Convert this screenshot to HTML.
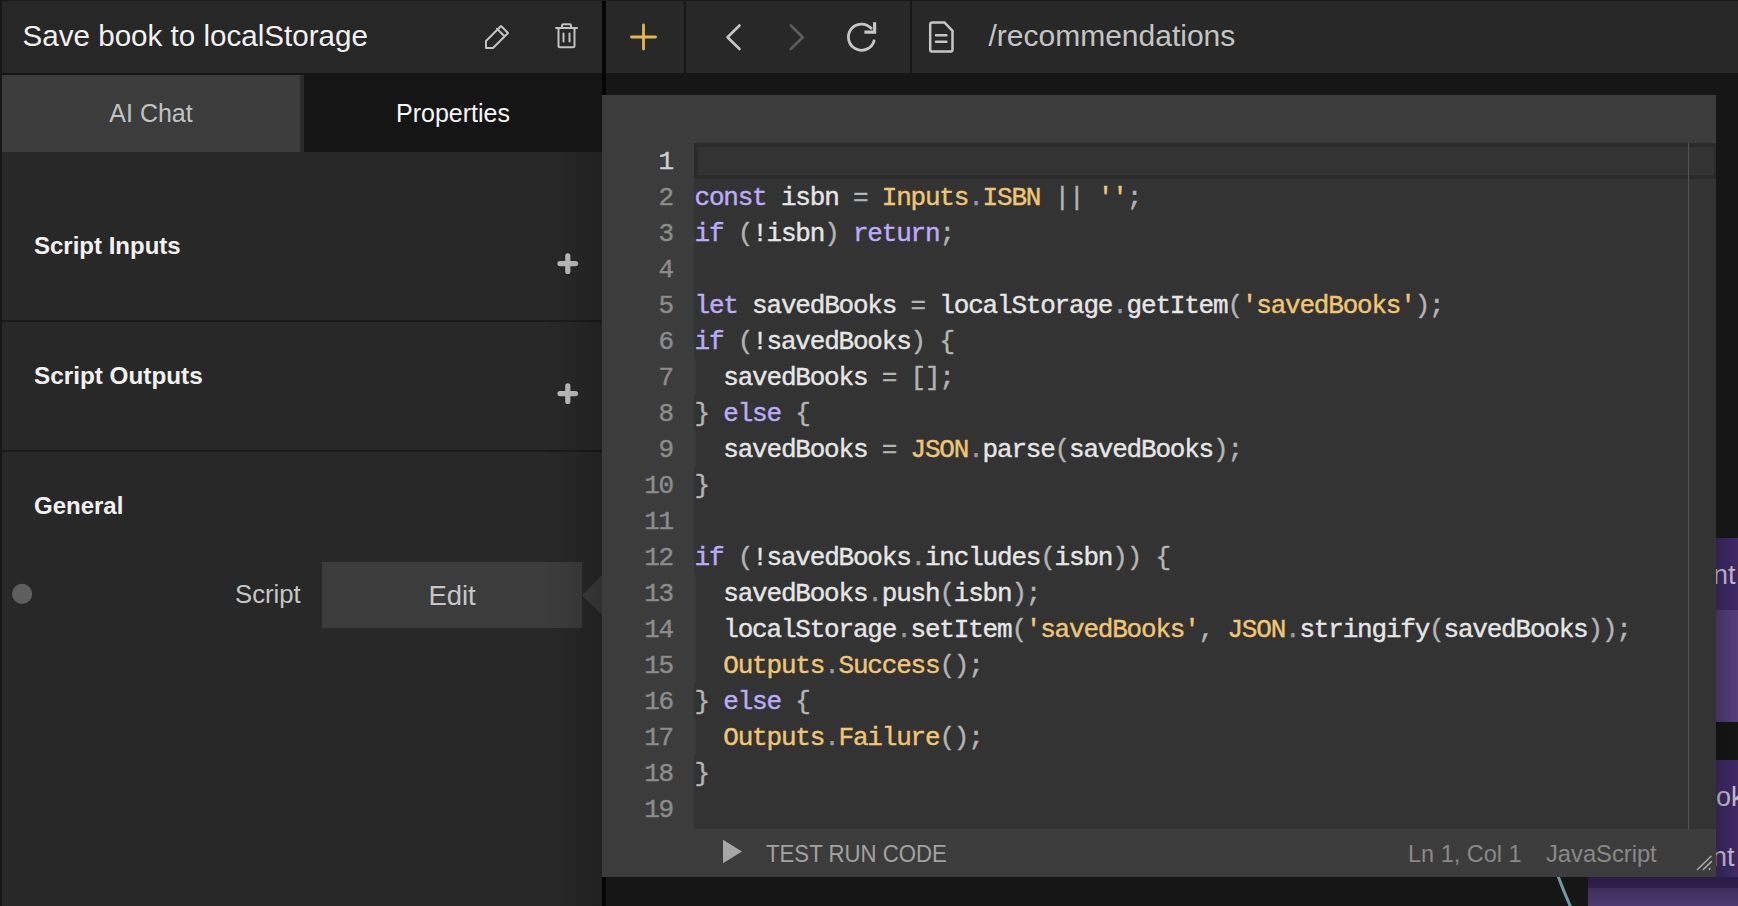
<!DOCTYPE html>
<html><head><meta charset="utf-8">
<style>
*{margin:0;padding:0;box-sizing:border-box}
html,body{width:1738px;height:906px;overflow:hidden;background:#161616;font-family:"Liberation Sans",sans-serif}
.abs{position:absolute}
#lp{position:absolute;left:0;top:0;width:602px;height:906px;z-index:5;background:#282828;overflow:hidden}
#lborder{left:0;top:0;width:2px;height:906px;background:#171717}
#hdr{left:2px;top:1px;width:600px;height:72px;background:#272727}
#hdrline{left:0;top:0;width:602px;height:1px;background:#1a1a1a}
#hdrb{left:2px;top:73px;width:600px;height:2px;background:#151515}
#title{left:22.5px;top:18.5px;font-size:29.6px;color:#f2f2f2;white-space:nowrap;line-height:34px}
#tab1{left:2px;top:75px;width:298px;height:77px;background:#3c3c3c;color:#c2c2c2;font-size:25px;text-align:center;line-height:77px}
#tabgap{left:300px;top:75px;width:4px;height:77px;background:#2b2b2b}
#tab2{left:304px;top:73px;width:298px;height:79px;background:#151515;color:#f7f7f7;font-size:25px;text-align:center;line-height:81px}
.sep{left:2px;width:600px;height:2px;background:#1b1b1b}
.sh{left:34px;font-size:24px;font-weight:bold;color:#f2f2f2;white-space:nowrap;line-height:28px}
#shadow{left:540px;top:152px;width:62px;height:754px;background:linear-gradient(to right,rgba(0,0,0,0),rgba(0,0,0,0.05) 45%,rgba(0,0,0,0.2))}
#blackbar{left:602px;top:0;width:4px;height:95px;background:#050505;z-index:2}
#topbar{left:606px;top:1px;width:1132px;height:72px;background:#282828;z-index:2}
#topline{left:602px;top:0;width:1136px;height:1px;background:#1a1a1a;z-index:2}
.vdiv{top:1px;width:2px;height:72px;background:#171717;z-index:3}
#url{left:988.5px;top:19px;font-size:30px;color:#c4c4c4;white-space:nowrap;line-height:34px;z-index:3}
#ticons{z-index:3}
#frame{left:602px;top:95px;width:1114px;height:782px;background:#3c3c3c;z-index:1}
#fc{position:absolute;left:0;top:0;width:1738px;height:906px;z-index:4}
#code{left:694px;top:143px;width:1022px;height:686px;background:#333333}
#active{left:694px;top:143px;width:1022px;height:36px;border:4px solid #2b2b2b;border-right-width:2px;background:#333}
#ruler{left:1688px;top:143px;width:1px;height:686px;background:#545454}
#status{left:602px;top:829px;width:1114px;height:48px;background:#3c3c3c}
.ln{position:absolute;left:602px;width:71px;margin-top:0.5px;text-align:right;font-family:"Liberation Mono",monospace;font-size:26px;letter-spacing:-1.2px;color:#8c8c8c;line-height:36px;height:36px;-webkit-text-stroke:0.4px currentColor}
.cl{position:absolute;left:694.5px;margin-top:1px;font-family:"Liberation Mono",monospace;font-size:26px;letter-spacing:-1.2px;color:#e6e6e6;line-height:36px;height:36px;white-space:pre;-webkit-text-stroke:0.4px currentColor}
.ig{left:694px;width:2px;height:36px;background:#3a3a3a}
.k{color:#bcacf8}.y{color:#f0c674}.p{color:#b4b4b4}.d{color:#9a9a9a}.act{color:#d0d0d0}
.nt{position:absolute;font-size:27px;color:#cbc3d6;white-space:nowrap;line-height:34px}
.sb{position:absolute;top:839px;font-size:24.1px;white-space:nowrap;line-height:30px;transform-origin:0 0}
</style></head><body>
<div id="lp">
<div id="hdr" class="abs"></div>
<div id="hdrline" class="abs"></div>
<div id="lborder" class="abs"></div>
<div id="hdrb" class="abs"></div>
<div id="title" class="abs">Save book to localStorage</div>
<div id="tab1" class="abs">AI Chat</div>
<div id="tabgap" class="abs"></div>
<div id="tab2" class="abs">Properties</div>
<div class="abs sh" id="sh1" style="top:232px">Script Inputs</div>
<div class="abs sep" style="top:320px"></div>
<div class="abs sh" id="sh2" style="top:362px;font-size:24.3px">Script Outputs</div>
<div class="abs sep" style="top:450px"></div>
<div class="abs sh" id="sh3" style="top:492px">General</div>
<div class="abs" id="scriptlbl" style="left:235px;top:579px;font-size:25.7px;color:#c6c6c6;line-height:30px">Script</div>
<div class="abs" id="editbtn" style="left:322px;top:562px;width:260px;height:66px;background:#3c3c3c;color:#c6c6c6;font-size:27.4px;text-align:center;line-height:68px">Edit</div>
<svg class="abs" style="left:0;top:0" width="602" height="906" viewBox="0 0 602 906" fill="none">
 <g stroke="#c2c2c2" stroke-width="2" stroke-linejoin="round" stroke-linecap="round">
  <path d="M486 41 L501 26 L508 33 L493 48 L486 48 Z"/>
  <path d="M497 28.8 L504 35.8"/>
 </g>
 <g stroke="#c2c2c2" stroke-width="2" stroke-linejoin="round" stroke-linecap="round">
  <path d="M556 28 L577 28"/>
  <path d="M562 27.5 L562 25.5 Q562 24.3 563.2 24.3 L569.8 24.3 Q571 24.3 571 25.5 L571 27.5"/>
  <path d="M558.5 28.5 L558.5 45.8 Q558.5 47.3 560 47.3 L573 47.3 Q574.5 47.3 574.5 45.8 L574.5 28.5"/>
  <path d="M563.5 33.5 L563.5 41.5 M569.5 33.5 L569.5 41.5"/>
 </g>
 <g stroke="#bdbdbd" stroke-width="5.2" stroke-linecap="round">
  <path d="M567.8 255.8 L567.8 271.4 M560 263.6 L575.6 263.6"/>
  <path d="M567.8 385.8 L567.8 401.4 M560 393.6 L575.6 393.6"/>
 </g>
 <circle cx="22.1" cy="593.9" r="10.1" fill="#5e5e5e"/>
 <path d="M582 595.5 L602 575 L602 615 Z" fill="#3c3c3c"/>
</svg>
<div id="shadow" class="abs"></div>
</div>

<div id="blackbar" class="abs"></div><div class="abs" style="left:602px;top:877px;width:4px;height:29px;background:#050505"></div>
<div id="topline" class="abs"></div>
<div id="topbar" class="abs"></div>
<div class="abs vdiv" style="left:684px"></div>
<div class="abs vdiv" style="left:910px"></div>
<div id="url" class="abs">/recommendations</div>
<svg id="ticons" class="abs" style="left:606px;top:0" width="360" height="73" viewBox="606 0 360 73" fill="none">
 <g stroke="#e4b64e" stroke-width="2.8" stroke-linecap="round">
  <path d="M643.5 25 L643.5 49 M631.5 37 L655.5 37"/>
 </g>
 <path d="M739.5 25.5 L727.5 37.2 L739.5 49" stroke="#c6c6c6" stroke-width="2.6" stroke-linecap="round" stroke-linejoin="round"/>
 <path d="M790.8 25.5 L802.8 37.2 L790.8 49" stroke="#5c5c5c" stroke-width="2.6" stroke-linecap="round" stroke-linejoin="round"/>
 <g stroke="#c6c6c6" stroke-width="2.8" stroke-linecap="round" stroke-linejoin="round">
  <path d="M874.1 40.8 A13.1 13.1 0 1 1 871.2 28.3"/>
  <path d="M866 32.2 L874.6 32.2 L874.6 23.8" stroke-width="3.2" stroke-linecap="square" stroke-linejoin="miter"/>
 </g>
 <g stroke="#c6c6c6" stroke-width="2.5" stroke-linecap="round" stroke-linejoin="round">
  <path d="M932.4 22.4 L944.4 22.4 L952.5 30.8 L952.5 49.4 Q952.5 51.6 950.3 51.6 L932.4 51.6 Q930.2 51.6 930.2 49.4 L930.2 24.6 Q930.2 22.4 932.4 22.4 Z"/>
  <path d="M936 35.3 L946.4 35.3 M936 41.7 L946.4 41.7"/>
 </g>
</svg>

<div class="abs" id="node1" style="left:1600px;top:537.5px;width:200px;height:184.5px;background:#553f7e">
 <div class="abs" style="left:0;top:0;width:200px;height:72px;background:#402a69"></div>
 <div class="nt" style="left:98px;top:20px">ent</div>
</div>
<div class="abs" id="node2" style="left:1588px;top:760px;width:220px;height:160px;background:#553f7e">
 <div class="abs" style="left:0;top:0;width:220px;height:127.5px;background:#402a69"></div>
 <div class="nt" style="left:113px;top:20px">ook</div>
 <div class="nt" style="left:109px;top:80px">ent</div>
</div>
<div class="abs" style="left:1716px;top:537px;width:22px;height:340px;background:linear-gradient(to right,rgba(0,0,0,0.22),rgba(0,0,0,0.02))"></div>
<div class="abs" style="left:1588px;top:877px;width:150px;height:29px;background:linear-gradient(to bottom,rgba(0,0,0,0.34),rgba(0,0,0,0.28) 40%,rgba(0,0,0,0.08))"></div>
<svg class="abs" style="left:1540px;top:860px" width="60" height="50" viewBox="1540 860 60 50" fill="none"><path d="M1556.5 872 Q1563 890 1572 910" stroke="#6c9ba4" stroke-width="3"/></svg>

<div id="frame" class="abs"></div>
<div id="fc">
<div id="code" class="abs"></div>
<div id="active" class="abs"></div>
<div id="ruler" class="abs"></div>
<div class="abs ig" style="top:359px"></div><div class="abs ig" style="top:431px"></div><div class="abs ig" style="top:575px"></div><div class="abs ig" style="top:611px"></div><div class="abs ig" style="top:647px"></div><div class="abs ig" style="top:719px"></div>
<div id="status" class="abs"></div>
<svg class="abs" style="left:720px;top:838px" width="26" height="28" viewBox="720 838 26 28"><path d="M723 839.8 L742 851.5 L723 863.3 Z" fill="#a6a6a6"/></svg>
<div class="sb" id="testrun" style="left:765.5px;color:#a2a2a2;transform:scaleX(0.921)">TEST RUN CODE</div>
<div class="sb" id="lncol" style="left:1407.5px;color:#898989;transform:scaleX(0.975)">Ln 1, Col 1</div>
<div class="sb" id="jslbl" style="left:1545.5px;color:#898989;transform:scaleX(0.984)">JavaScript</div>
<svg class="abs" style="left:1690px;top:850px" width="26" height="26" viewBox="1690 850 26 26" fill="none" stroke="#a8a8a8" stroke-width="1.6" stroke-linecap="round">
 <path d="M1697.5 869.5 L1711 856.3 M1703.3 869.5 L1711.3 861.6 M1709.3 869.3 L1710 868.6"/>
</svg>
<div class="ln act" style="top:143px">1</div>
<div class="cl" style="top:143px"></div>
<div class="ln" style="top:179px">2</div>
<div class="cl" style="top:179px"><span class="k">const</span> isbn <span class="p">=</span> <span class="y">Inputs</span><span class="d">.</span><span class="y">ISBN</span> <span class="p">|</span><span class="p">|</span> <span class="y">&#x27;&#x27;</span><span class="p">;</span></div>
<div class="ln" style="top:215px">3</div>
<div class="cl" style="top:215px"><span class="k">if</span> <span class="p">(</span>!isbn<span class="p">)</span> <span class="k">return</span><span class="p">;</span></div>
<div class="ln" style="top:251px">4</div>
<div class="cl" style="top:251px"></div>
<div class="ln" style="top:287px">5</div>
<div class="cl" style="top:287px"><span class="k">let</span> savedBooks <span class="p">=</span> localStorage<span class="d">.</span>getItem<span class="p">(</span><span class="y">&#x27;savedBooks&#x27;</span><span class="p">)</span><span class="p">;</span></div>
<div class="ln" style="top:323px">6</div>
<div class="cl" style="top:323px"><span class="k">if</span> <span class="p">(</span>!savedBooks<span class="p">)</span> <span class="p">{</span></div>
<div class="ln" style="top:359px">7</div>
<div class="cl" style="top:359px">  savedBooks <span class="p">=</span> <span class="p">[</span><span class="p">]</span><span class="p">;</span></div>
<div class="ln" style="top:395px">8</div>
<div class="cl" style="top:395px"><span class="p">}</span> <span class="k">else</span> <span class="p">{</span></div>
<div class="ln" style="top:431px">9</div>
<div class="cl" style="top:431px">  savedBooks <span class="p">=</span> <span class="y">JSON</span><span class="d">.</span>parse<span class="p">(</span>savedBooks<span class="p">)</span><span class="p">;</span></div>
<div class="ln" style="top:467px">10</div>
<div class="cl" style="top:467px"><span class="p">}</span></div>
<div class="ln" style="top:503px">11</div>
<div class="cl" style="top:503px"></div>
<div class="ln" style="top:539px">12</div>
<div class="cl" style="top:539px"><span class="k">if</span> <span class="p">(</span>!savedBooks<span class="d">.</span>includes<span class="p">(</span>isbn<span class="p">)</span><span class="p">)</span> <span class="p">{</span></div>
<div class="ln" style="top:575px">13</div>
<div class="cl" style="top:575px">  savedBooks<span class="d">.</span>push<span class="p">(</span>isbn<span class="p">)</span><span class="p">;</span></div>
<div class="ln" style="top:611px">14</div>
<div class="cl" style="top:611px">  localStorage<span class="d">.</span>setItem<span class="p">(</span><span class="y">&#x27;savedBooks&#x27;</span><span class="p">,</span> <span class="y">JSON</span><span class="d">.</span>stringify<span class="p">(</span>savedBooks<span class="p">)</span><span class="p">)</span><span class="p">;</span></div>
<div class="ln" style="top:647px">15</div>
<div class="cl" style="top:647px">  <span class="y">Outputs</span><span class="d">.</span><span class="y">Success</span><span class="p">(</span><span class="p">)</span><span class="p">;</span></div>
<div class="ln" style="top:683px">16</div>
<div class="cl" style="top:683px"><span class="p">}</span> <span class="k">else</span> <span class="p">{</span></div>
<div class="ln" style="top:719px">17</div>
<div class="cl" style="top:719px">  <span class="y">Outputs</span><span class="d">.</span><span class="y">Failure</span><span class="p">(</span><span class="p">)</span><span class="p">;</span></div>
<div class="ln" style="top:755px">18</div>
<div class="cl" style="top:755px"><span class="p">}</span></div>
<div class="ln" style="top:791px">19</div>
<div class="cl" style="top:791px"></div>
</div>
</body></html>
